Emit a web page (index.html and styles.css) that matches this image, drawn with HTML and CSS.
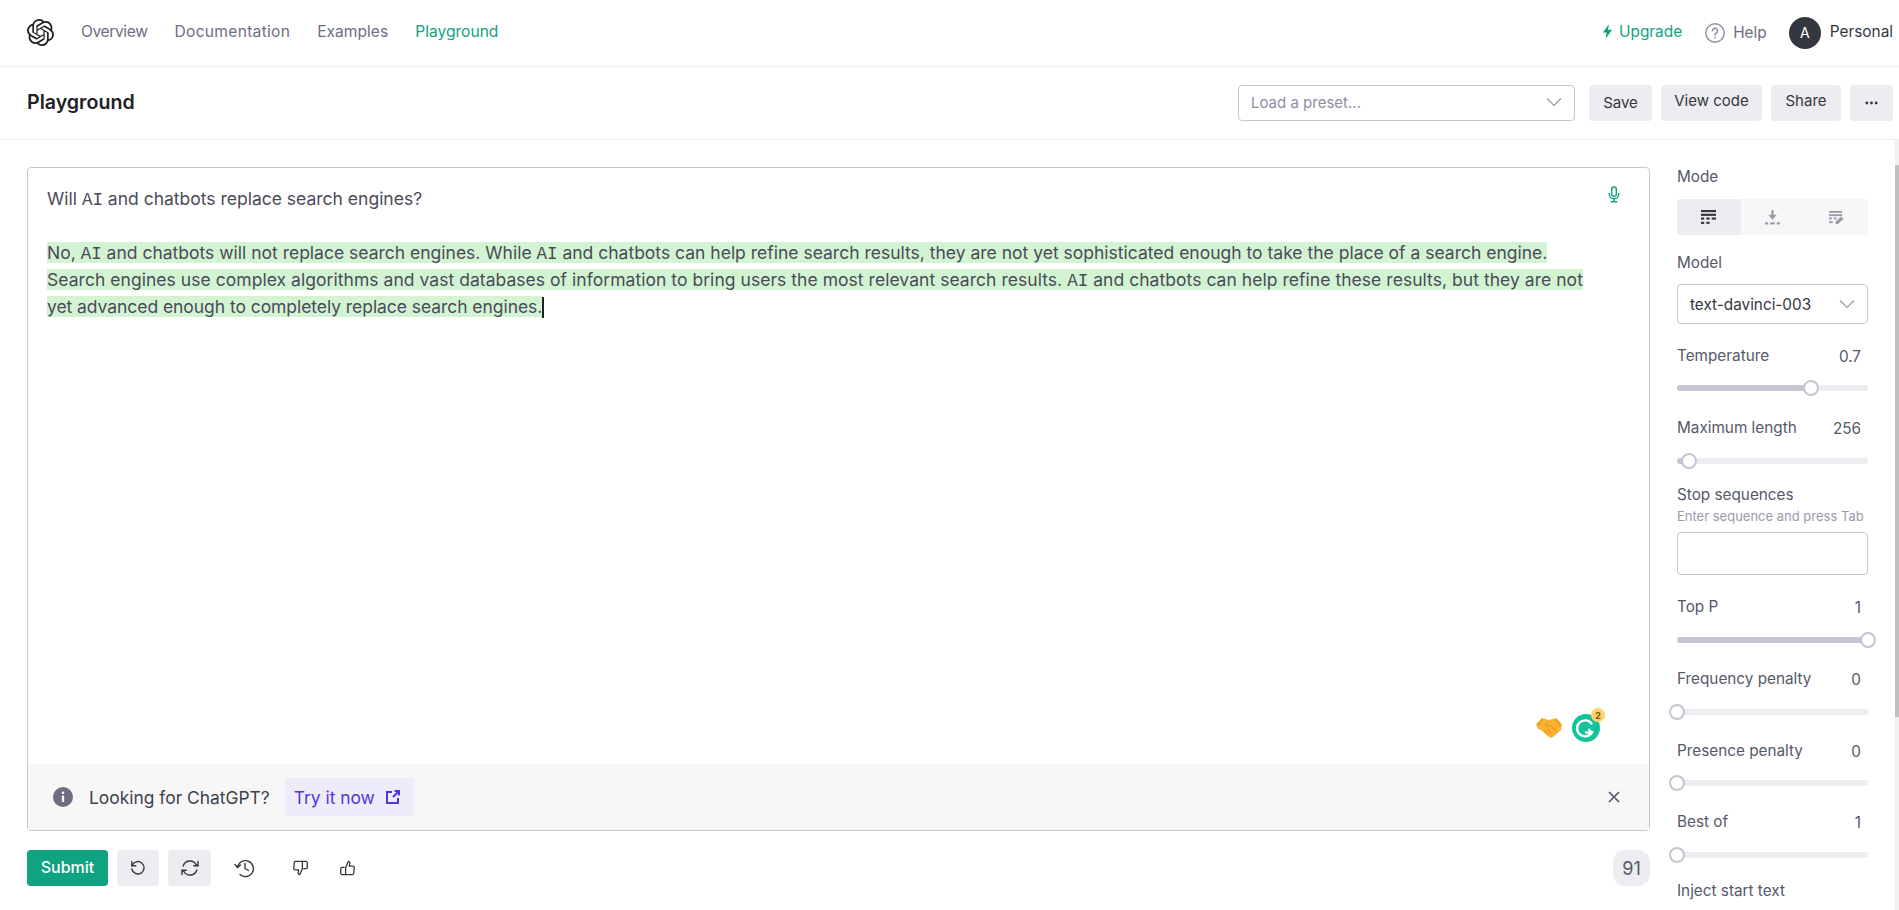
FILE: index.html
```html
<!DOCTYPE html>
<html lang="en">
<head>
<meta charset="utf-8">
<title>Playground</title>
<link rel="stylesheet" href="styles.css">
</head>
<body>
<header class="topnav">
  <svg class="logo" viewBox="0 0 24 24"><path fill="#202123" d="M22.2819 9.8211a5.9847 5.9847 0 0 0-.5157-4.9108 6.0462 6.0462 0 0 0-6.5098-2.9A6.0651 6.0651 0 0 0 4.9807 4.1818a5.9847 5.9847 0 0 0-3.9977 2.9 6.0462 6.0462 0 0 0 .7427 7.0966 5.98 5.98 0 0 0 .511 4.9107 6.051 6.051 0 0 0 6.5146 2.9001A5.9847 5.9847 0 0 0 13.2599 24a6.0557 6.0557 0 0 0 5.7718-4.2058 5.9894 5.9894 0 0 0 3.9977-2.9001 6.0557 6.0557 0 0 0-.7475-7.0729zm-9.022 12.6081a4.4755 4.4755 0 0 1-2.8764-1.0408l.1419-.0804 4.7783-2.7582a.7948.7948 0 0 0 .3927-.6813v-6.7369l2.02 1.1686a.071.071 0 0 1 .038.052v5.5826a4.504 4.504 0 0 1-4.4945 4.4944zm-9.6607-4.1254a4.4708 4.4708 0 0 1-.5346-3.0137l.142.0852 4.783 2.7582a.7712.7712 0 0 0 .7806 0l5.8428-3.3685v2.3324a.0804.0804 0 0 1-.0332.0615L9.74 19.9502a4.4992 4.4992 0 0 1-6.1408-1.6464zM2.3408 7.8956a4.485 4.485 0 0 1 2.3655-1.9728V11.6a.7664.7664 0 0 0 .3879.6765l5.8144 3.3543-2.0201 1.1685a.0757.0757 0 0 1-.071 0l-4.8303-2.7865A4.504 4.504 0 0 1 2.3408 7.872zm16.5963 3.8558L13.1038 8.364 15.1192 7.2a.0757.0757 0 0 1 .071 0l4.8303 2.7913a4.4944 4.4944 0 0 1-.6765 8.1042v-5.6772a.79.79 0 0 0-.407-.667zm2.0107-3.0231l-.142-.0852-4.7735-2.7818a.7759.7759 0 0 0-.7854 0L9.409 9.2297V6.8974a.0662.0662 0 0 1 .0284-.0615l4.8303-2.7866a4.4992 4.4992 0 0 1 6.6802 4.66zM8.3065 12.863l-2.02-1.1638a.0804.0804 0 0 1-.038-.0567V6.0742a4.4992 4.4992 0 0 1 7.3757-3.4537l-.142.0805L8.704 5.459a.7948.7948 0 0 0-.3927.6813zm1.0976-2.3654l2.602-1.4998 2.6069 1.4998v2.9994l-2.5974 1.4997-2.6067-1.4997Z"/></svg>
  <nav class="links">
    <a class="link link-tight">Overview</a>
    <a class="link link-loose">Documentation</a>
    <a class="link">Examples</a>
    <a class="link link-active">Playground</a>
  </nav>
  <div class="account">
    <span class="upgrade"><svg class="bolt" viewBox="0 0 12 16"><path fill="#10a37f" d="M7.5 0 1 9h4l-1 7 7-10H6.6z"/></svg>Upgrade</span>
    <span class="help"><svg class="help-icon" viewBox="0 0 20 20"><circle cx="10" cy="10" r="9.2" fill="none" stroke="#8e8ea0" stroke-width="1.4"/><path fill="none" stroke="#8e8ea0" stroke-width="1.5" stroke-linecap="round" d="M7.4 7.8a2.6 2.6 0 1 1 4 2.2c-.9.6-1.4 1-1.4 2"/><circle cx="10" cy="14.6" r=".9" fill="#8e8ea0"/></svg>Help</span>
    <span class="avatar">A</span>
    <span class="personal">Personal</span>
  </div>
</header>

<section class="subhead">
  <h1 class="title">Playground</h1>
  <div class="tools">
    <div class="preset"><span>Load a preset...</span><svg class="chev" viewBox="0 0 16 10"><path d="M1 1.5 8 8.5 15 1.5"/></svg></div>
    <button class="btn btn-save">Save</button>
    <button class="btn btn-code">View code</button>
    <button class="btn btn-share">Share</button>
    <button class="btn btn-more"><svg class="dots" viewBox="0 0 14 4"><circle cx="2" cy="2" r="1.5"/><circle cx="7" cy="2" r="1.5"/><circle cx="12" cy="2" r="1.5"/></svg></button>
  </div>
</section>

<main class="workspace">
  <div class="editor-col">
    <div class="editor">
      <div class="editor-body">
        <svg class="mic" viewBox="0 0 12 18"><rect x="3.5" y="1" width="5" height="10" rx="2.5" fill="none" stroke="#10a37f" stroke-width="1.5"/><path fill="none" stroke="#10a37f" stroke-width="1.5" d="M1 7.5v1a5 5 0 0 0 10 0v-1M6 13.5V16.5M2.5 16.7h7"/></svg>
        <p class="prompt">Will <span class="ai">AI</span> and chatbots replace search engines?</p>
        <p class="answer"><mark class="hl">No, <span class="ai">AI</span> and chatbots will not replace search engines. While <span class="ai">AI</span> and chatbots can help refine search results, they are not yet sophisticated enough to take the place of a search engine.</mark><br><mark class="hl hl-wide">Search engines use complex algorithms and vast databases of information to bring users the most relevant search results. <span class="ai">AI</span> and chatbots can help refine these results, but they are not</mark><br><mark class="hl hl-narrow">yet advanced enough to completely replace search engines.</mark><span class="caret"></span></p>
        <div class="ext">
          <svg class="shake" viewBox="0 0 26 20"><path fill="#f9b233" d="M0 6 6 0l7 2 7-2 6 6-1 6-8 7c-1.500 1-3 1-4 0l-8-7-3-1z"/><path fill="none" stroke="#e08e0b" stroke-width="1" d="M6 1 2 8M20 1l4 7M13 3 9 7c1 2 3 2 5 0l7 7M11 11l5 5M8 12l5 5"/></svg>
          <span class="gram"><svg class="gram-g" viewBox="0 0 28 28"><circle cx="14" cy="14" r="14" fill="#15c39a"/><path fill="none" stroke="#fff" stroke-width="2.400" stroke-linecap="round" d="M19.500 9.500A8 8 0 1 0 20 18.500H14"/><path fill="none" stroke="#fff" stroke-width="2" stroke-linecap="round" d="M17 15.500l3 3-3 3"/></svg><span class="gram-badge">2</span></span>
        </div>
      </div>
      <div class="notice">
        <svg class="info" viewBox="0 0 20 20"><circle cx="10" cy="10" r="10" fill="#6e6e80"/><circle cx="10" cy="5.800" r="1.300" fill="#fff"/><rect x="8.900" y="8.500" width="2.200" height="6.500" rx=".6" fill="#fff"/></svg>
        <span class="notice-text">Looking for ChatGPT?</span>
        <span class="try">Try it now<svg class="ext-link" viewBox="0 0 14 14"><path fill="none" stroke="#5436da" stroke-width="2" d="M6 2H1v11h11V8M7 7l6-6M8.500 1H13v4.500"/></svg></span>
        <svg class="close" viewBox="0 0 12 12"><path d="M1 1l10 10M11 1 1 11"/></svg>
      </div>
    </div>
    <div class="actions">
      <button class="submit">Submit</button>
      <button class="icon-btn undo"><svg class="ico" viewBox="0 0 16 16"><path d="M1.800 1.800v4h4"/><path d="M2 5.800A6.200 6.200 0 1 1 1.800 9"/></svg></button>
      <button class="icon-btn regen"><svg class="ico ico-wide" viewBox="0 0 18 16"><path d="M17 1.500v4.200h-4.200M1 14.500v-4.200h4.200"/><path d="M2.200 6A7 7 0 0 1 15 4.500l2 1.200M15.800 10A7 7 0 0 1 3 11.500l-2-1.200"/></svg></button>
      <svg class="plain history" viewBox="0 0 20 20"><path d="M1 6.500l2.500 3 3-2.500"/><path d="M3.500 9.500A8 8 0 1 1 6 16.500"/><path d="M11 5.500V10.500l3.500 2"/></svg>
      <svg class="plain thumb down" viewBox="0 0 16 16"><path d="M11.500 1H2.800c-.7 0-1.200.4-1.400 1L.8 8.500c0 .8.500 1.500 1.400 1.500h3.900l-.6 3.300c0 1 .800 1.700 1.700 1.700l2.800-6.300V1zM11.500 1h2.200c.8 0 1.500.6 1.500 1.400v5c0 .8-.7 1.300-1.500 1.300h-2.200"/></svg>
      <svg class="plain thumb up" viewBox="0 0 16 16"><path d="M4.500 15h8.700c.7 0 1.200-.4 1.400-1l.6-6.500c0-.8-.5-1.500-1.400-1.500H9.900l.6-3.300c0-1-.8-1.700-1.700-1.700L6 7.800V15zM4.500 15H2.300C1.500 15 .8 14.400.8 13.600v-5c0-.8.7-1.300 1.500-1.300h2.200"/></svg>
      <span class="count">91</span>
    </div>
  </div>

  <aside class="panel">
    <div class="label label-mode">Mode</div>
    <div class="segments">
      <span class="seg seg-on"><svg class="seg-ico" viewBox="0 0 14 14" fill="#353740"><rect y="0" width="14" height="2"/><rect y="3.500" width="14" height="2"/><rect y="7" width="3" height="2"/><rect y="7" x="5" width="3" height="2"/><rect y="7" x="10" width="4" height="2"/><rect y="11" width="3" height="2"/><rect y="11" x="5" width="3" height="2"/></svg></span>
      <span class="seg"><svg class="seg-ico" viewBox="0 0 14 14" fill="#9b9aa9"><path d="M6 0h2v4.500h3L7 9 3 4.500h3z"/><rect y="11.500" width="3" height="2"/><rect x="5" y="11.500" width="4" height="2"/><rect x="11" y="11.500" width="3" height="2"/></svg></span>
      <span class="seg"><svg class="seg-ico" viewBox="0 0 16 14" fill="#9b9aa9"><rect width="14" height="2"/><rect y="3.500" width="14" height="2"/><rect y="7" width="3" height="2"/><rect x="5" y="7" width="3" height="2"/><rect y="11" width="4" height="2"/><path d="M7 14v-2.500l6-5.500 2.500 2.500-6 5.500z"/></svg></span>
    </div>
    <div class="label label-model">Model</div>
    <div class="model"><span>text-davinci-003</span><svg class="chev" viewBox="0 0 16 10"><path d="M1 1.500 8 8.500 15 1.500"/></svg></div>

    <div class="row row-temp"><span class="label">Temperature</span><span class="val">0.7</span></div>
    <div class="track track-tight"><span class="fill" style="width:70%"></span><span class="thumb-dot" style="left:70%"></span></div>

    <div class="row row-max"><span class="label">Maximum length</span><span class="val">256</span></div>
    <div class="track"><span class="fill" style="width:6.5%"></span><span class="thumb-dot" style="left:6.5%"></span></div>

    <div class="label label-stop">Stop sequences</div>
    <div class="hint">Enter sequence and press Tab</div>
    <div class="stop-box"></div>

    <div class="row row-top"><span class="label">Top P</span><span class="val">1</span></div>
    <div class="track"><span class="fill" style="width:100%"></span><span class="thumb-dot" style="left:100%"></span></div>

    <div class="row row-next"><span class="label">Frequency penalty</span><span class="val">0</span></div>
    <div class="track"><span class="thumb-dot" style="left:0"></span></div>

    <div class="row row-next"><span class="label">Presence penalty</span><span class="val">0</span></div>
    <div class="track track-tight"><span class="thumb-dot" style="left:0"></span></div>

    <div class="row row-next"><span class="label">Best of</span><span class="val">1</span></div>
    <div class="track"><span class="thumb-dot" style="left:0"></span></div>

    <div class="label label-inject">Inject start text</div>
  </aside>
  <div class="scrollbar"><div class="scroll-thumb"></div></div>
</main>
</body>
</html>
```
FILE: styles.css
```css
* { box-sizing: border-box; }
html, body { margin: 0; height: 100%; overflow: hidden; background: #fff; }
body { font-family: Inter, "Noto Sans", sans-serif; font-size: 14px; color: #353740; height: 910px; }
button { font: inherit; border: 0; cursor: pointer; }
p, h1 { margin: 0; }

.topnav { height: 67px; display: flex; align-items: center; padding-left: 27px; border-bottom: 1px solid #ececf1; }
.logo { width: 27px; height: 27px; margin-top: -1px; }
.links { display: flex; gap: 27px; margin-left: 27px; padding-bottom: 3px; }
.link { color: #6e6e80; font-size: 15.6px; }
.link-tight { letter-spacing: -0.4px; }
.link-loose { letter-spacing: 0.28px; }
.link-active { color: #10a37f; }
.account { margin-left: auto; display: flex; align-items: center; width: 297px; flex: none; margin-top: -1px; font-size: 15.4px; }
.upgrade { display: flex; align-items: center; color: #10a37f; gap: 6px; padding-bottom: 2px; }
.bolt { width: 11px; height: 15px; }
.help { display: flex; align-items: center; color: #6e6e80; gap: 8px; margin-left: 23px; }
.help-icon { width: 20px; height: 20px; }
.avatar { width: 32px; height: 32px; border-radius: 50%; background: #353740; color: #fff; display: flex; align-items: center; justify-content: center; font-size: 14px; margin-left: 22px; }
.personal { margin-left: 9px; color: #353740; white-space: nowrap; padding-bottom: 2px; }

.subhead { height: 73px; display: flex; align-items: center; padding: 0 6px 0 27px; border-bottom: 1px solid #ececf1; }
.title { font-size: 19.6px; font-weight: 600; color: #202123; padding-bottom: 3px; }
.tools { margin-left: auto; display: flex; align-items: center; gap: 9px; }
.preset { width: 337px; height: 36px; border: 1px solid #c5c5d2; border-radius: 4px; display: flex; align-items: center; justify-content: space-between; padding: 0 12px 2px; color: #8e8ea0; font-size: 15px; margin-right: 5px; }
.chev { width: 16px; height: 10px; fill: none; stroke: #9b9aa9; stroke-width: 1.2; }
.btn { height: 36px; background: #ececf1; border-radius: 4px; color: #353740; font-size: 15px; padding: 0 0 2px; }
.btn-save { width: 63px; }
.btn-code { width: 101px; padding-bottom: 5px; }
.btn-share { width: 70px; padding-bottom: 5px; }
.btn-more { width: 43px; padding: 0; display: flex; align-items: center; justify-content: center; }
.dots { width: 13px; height: 4px; fill: #353740; }

.workspace { display: flex; height: 770px; overflow: hidden; }
.editor-col { width: 1623px; margin: 27px 0 0 27px; flex: none; }
.editor { height: 664px; border: 1px solid #c5c5d2; border-radius: 4px; display: flex; flex-direction: column; }
.editor-body { flex: 1; position: relative; padding: 17px 19px; font-size: 17.5px; line-height: 27px; white-space: nowrap; color: #4a4b58; }
.ai { font-family: "Liberation Mono", monospace; line-height: 1; }
.answer { margin-top: 27px; }
.hl { background: #d2f4d3; color: #4a4b58; }
.hl-wide { letter-spacing: 0.042px; }
.hl-narrow { letter-spacing: -0.06px; }
.caret { display: inline-block; width: 2px; height: 21px; background: #202123; vertical-align: -5px; }
.mic { position: absolute; top: 18px; right: 29px; width: 12px; height: 17px; }
.ext { position: absolute; right: 49px; bottom: 22px; display: flex; align-items: center; gap: 10px; }
.shake { width: 26px; height: 20px; }
.gram { position: relative; display: block; width: 28px; height: 28px; }
.gram-g { display: block; width: 28px; height: 28px; }
.gram-badge { position: absolute; top: -6px; right: -5px; width: 14px; height: 14px; border-radius: 50%; background: #fdd36a; color: #7a4a00; font-size: 9px; font-weight: 700; display: flex; align-items: center; justify-content: center; }

.notice { height: 66px; background: #f7f7f8; display: flex; align-items: center; padding: 0 29px 0 25px; font-size: 17.4px; }
.info { width: 20px; height: 20px; }
.notice-text { margin-left: 16px; color: #40414f; }
.try { margin-left: 15px; height: 38px; width: 129px; padding-left: 9px; gap: 11px; background: #ececfb; border-radius: 3px; color: #5436da; display: flex; align-items: center; }
.ext-link { width: 14px; height: 14px; }
.close { margin-left: auto; width: 12px; height: 12px; fill: none; stroke: #565869; stroke-width: 1.700; }

.actions { display: flex; align-items: center; margin-top: 19px; height: 36px; }
.submit { width: 81px; height: 36px; background: #10a37f; color: #fff; border-radius: 4px; font-size: 16px; font-weight: 500; padding: 0 0 3px; }
.icon-btn { height: 36px; background: #ececf1; border-radius: 4px; display: flex; align-items: center; justify-content: center; padding: 0; }
.undo { width: 42px; margin-left: 9px; }
.regen { width: 43px; margin-left: 9px; }
.ico, .plain { fill: none; stroke: #353740; stroke-width: 1.400; stroke-linecap: round; stroke-linejoin: round; }
.ico { width: 16px; height: 16px; }
.ico-wide { width: 18px; }
.history { width: 20px; height: 20px; margin-left: 23px; }
.thumb { width: 15px; height: 16px; }
.down { margin-left: 39px; }
.up { margin-left: 32px; }
.count { margin-left: auto; width: 37px; height: 36px; background: #ececf1; border-radius: 12px; display: flex; align-items: center; justify-content: center; font-size: 18px; color: #565869; }

.panel { width: 191px; margin: 0 0 0 27px; flex: none; padding-top: 28px; font-size: 15.3px; color: #40414f; }
.label { line-height: 18px; color: #565869; display: block; white-space: nowrap; }
.segments { margin-top: 13px; height: 36px; display: flex; background: #f7f7f8; border-radius: 4px; }
.seg { flex: 1; display: flex; align-items: center; justify-content: center; border-radius: 4px; }
.seg-on { background: #ececf1; }
.seg-ico { width: 15px; height: 15px; }
.label-model { margin-top: 19px; }
.model { margin-top: 12px; height: 40px; border: 1px solid #c5c5d2; border-radius: 4px; display: flex; align-items: center; justify-content: space-between; padding: 0 12px; color: #353740; }
.row { display: flex; justify-content: space-between; align-items: flex-start; height: 18px; padding-right: 7px; }
.row-temp { margin-top: 23px; }
.row-max { margin-top: 28px; }
.row-next { margin-top: 27px; }
.row-top { margin-top: 22px; }
.val { color: #565869; line-height: 18px; padding-top: 1px; }
.track { position: relative; height: 6px; margin-top: 21px; background: #ececf1; border-radius: 3px; }
.track-tight { margin-top: 20px; }
.fill { position: absolute; left: 0; top: 0; bottom: 0; background: #c5c5d2; border-radius: 3px; }
.thumb-dot { position: absolute; top: 50%; width: 16px; height: 16px; margin: -8px 0 0 -8px; background: #fff; border: 2px solid #c5c5d2; border-radius: 50%; }
.label-stop { margin-top: 22px; }
.hint { margin-top: 4px; font-size: 13px; line-height: 16px; color: #9b9aa9; white-space: nowrap; }
.stop-box { margin-top: 8px; height: 43px; border: 1px solid #c5c5d2; border-radius: 4px; }
.row-top { margin-top: 23px; }
.label-inject { margin-top: 24px; }

.scrollbar { margin-left: auto; width: 4px; background: #f1f1f1; height: 770px; }
.scroll-thumb { height: 552px; margin-top: 25px; background: #c1c1c1; }
```
